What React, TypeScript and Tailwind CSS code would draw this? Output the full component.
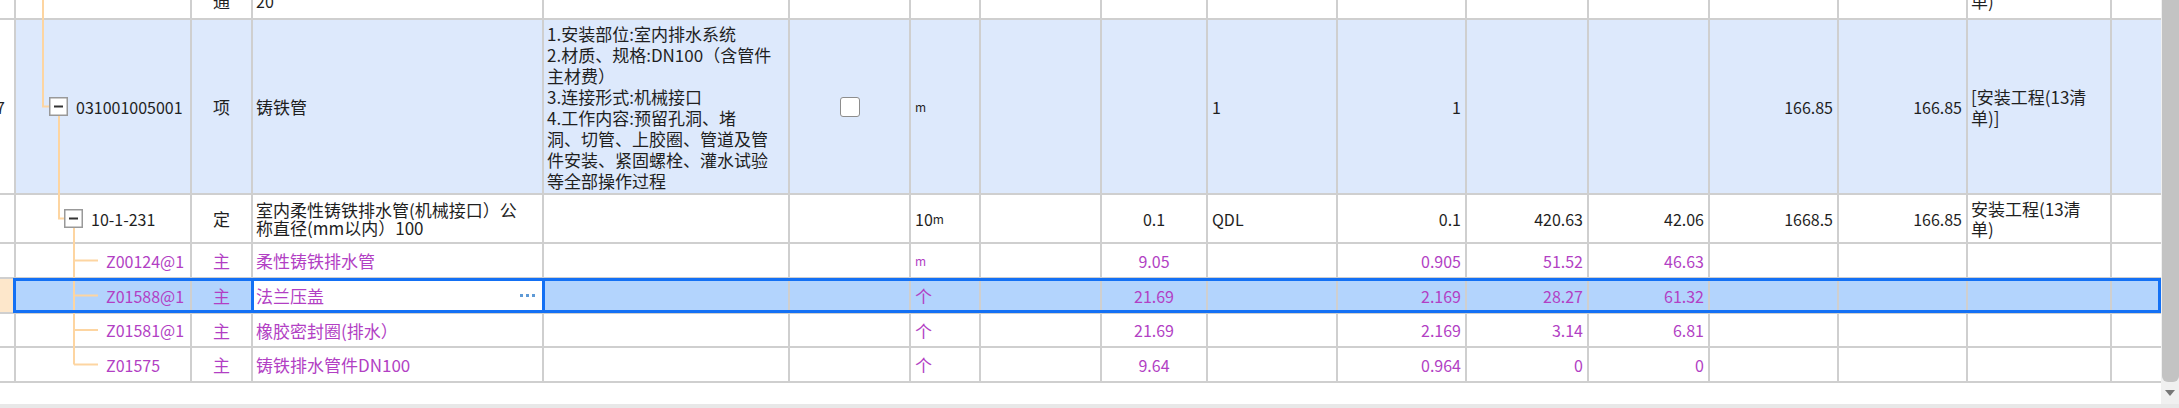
import type { ReactNode } from 'react'

// column widths between the 2px grid lines
const COLS =
  'grid-cols-[14px_174px_59px_289px_244px_119px_68px_119px_104px_128px_127px_120px_119px_127px_127px_142px_49px]'

const ROW_BLUE = 'bg-[#dde9fc]'
const ROW_SEL = 'bg-[#b3d4fd]'
const PURPLE = 'text-[#b23fc4]'

type Align = 'l' | 'c' | 'r' | 'b'

function Cell({
  bg = 'bg-white',
  align = 'l',
  className = '',
  children,
}: {
  bg?: string
  align?: Align
  className?: string
  children?: ReactNode
}) {
  const justify =
    align === 'c'
      ? 'justify-center'
      : align === 'r'
        ? 'justify-end pr-[4px]'
        : align === 'b'
          ? 'justify-between pl-[3px] pr-[7px]'
          : 'justify-start pl-[3px]'
  return (
    <div className={`flex items-center overflow-hidden whitespace-nowrap ${justify} ${bg} ${className}`}>
      {children}
    </div>
  )
}

// cells of the row cut off at the top edge: only the bottom of the text shows
function Cut({ align = 'l', offset, children }: { align?: Align; offset: string; children?: ReactNode }) {
  return (
    <div className={`overflow-hidden bg-white ${align === 'c' ? 'text-center' : 'pl-[3px]'}`}>
      <div className={`leading-[21px] whitespace-nowrap ${offset}`}>{children}</div>
    </div>
  )
}

const Num = ({ children }: { children: ReactNode }) => <span className="text-[16px] leading-none">{children}</span>
const Txt = ({ children }: { children: ReactNode }) => <span className="text-[17px] leading-none">{children}</span>

const materials = [
  { code: 'Z00124@1', name: '柔性铸铁排水管', unit: 'm', content: '9.05', qty: '0.905', price: '51.52', total: '46.63' },
  { code: 'Z01588@1', name: '法兰压盖', unit: '个', content: '21.69', qty: '2.169', price: '28.27', total: '61.32', selected: true },
  { code: 'Z01581@1', name: '橡胶密封圈(排水）', unit: '个', content: '21.69', qty: '2.169', price: '3.14', total: '6.81' },
  { code: 'Z01575', name: '铸铁排水管件DN100', unit: '个', content: '9.64', qty: '0.964', price: '0', total: '0' },
]

const features = [
  '1.安装部位:室内排水系统',
  '2.材质、规格:DN100（含管件',
  '主材费）',
  '3.连接形式:机械接口',
  '4.工作内容:预留孔洞、堵',
  '洞、切管、上胶圈、管道及管',
  '件安装、紧固螺栓、灌水试验',
  '等全部操作过程',
]

function MinusBox({ x, y }: { x: number; y: number }) {
  return (
    <g>
      <rect x={x + 0.75} y={y + 0.75} width={17.5} height={17.5} fill="#ffffff" stroke="#999999" strokeWidth={1.5} />
      <line x1={x + 5} y1={y + 9.5} x2={x + 14} y2={y + 9.5} stroke="#333333" strokeWidth={2} />
    </g>
  )
}

function TreeLines() {
  const childY = [260.5, 295.5, 330, 364.5]
  return (
    <svg className="absolute left-0 top-0 pointer-events-none" width={110} height={383} viewBox="0 0 110 383">
      <g stroke="#fdd5a1" strokeWidth={2} fill="none">
        <path d="M43 0 V106.5 H49" />
        <path d="M59 116 V218.5 H64" />
        <path d="M74 228 V364.5" />
        {childY.map((y) => (
          <path key={y} d={`M74 ${y} H98`} />
        ))}
      </g>
      <MinusBox x={49} y={97} />
      <MinusBox x={64} y={209} />
    </svg>
  )
}

export default function App() {
  return (
    <div className="w-[2179px] h-[408px] flex flex-col overflow-hidden bg-white text-[#1f1f1f] font-['Noto_Sans_CJK_SC',sans-serif]">
      <div className="flex flex-1 min-h-0">
        <div className="w-[2161px] flex flex-col">
          <div
            className={`relative grid ${COLS} grid-rows-[18px_173px_47px_33px_33px_32px_33px] gap-[2px] pb-[2px] bg-[#cfcfcf]`}
          >
            {/* row cut off at the top */}
            <div className="bg-white" />
            <div className="bg-white" />
            <Cut align="c" offset="-mt-[10px] text-[17px]">通</Cut>
            <Cut offset="-mt-[9px] text-[16px]">20</Cut>
            {Array.from({ length: 11 }).map((_, i) => (
              <div key={i} className="bg-white" />
            ))}
            <Cut offset="-mt-[10px] text-[17px]">单)</Cut>
            <div className="bg-white" />

            {/* 清单项 */}
            <Cell>
              <span className="text-[16px] leading-none -ml-[7px]">7</span>
            </Cell>
            <Cell bg={ROW_BLUE} className="pl-[60px]">
              <Num>031001005001</Num>
            </Cell>
            <Cell bg={ROW_BLUE} align="c">
              <Txt>项</Txt>
            </Cell>
            <Cell bg={ROW_BLUE}>
              <Txt>铸铁管</Txt>
            </Cell>
            <Cell bg={ROW_BLUE}>
              <div className="text-[17px] leading-[21px]">
                {features.map((l) => (
                  <div key={l}>{l}</div>
                ))}
              </div>
            </Cell>
            <Cell bg={ROW_BLUE} align="c">
              <div className="w-[20px] h-[20px] rounded-[3px] border border-[#8d8d8d] bg-white" />
            </Cell>
            <Cell bg={ROW_BLUE} className="pl-[4px]">
              <span className="text-[12px] leading-none">m</span>
            </Cell>
            <Cell bg={ROW_BLUE} />
            <Cell bg={ROW_BLUE} />
            <Cell bg={ROW_BLUE} className="pl-[4px]">
              <Num>1</Num>
            </Cell>
            <Cell bg={ROW_BLUE} align="r">
              <Num>1</Num>
            </Cell>
            <Cell bg={ROW_BLUE} />
            <Cell bg={ROW_BLUE} />
            <Cell bg={ROW_BLUE} align="r">
              <Num>166.85</Num>
            </Cell>
            <Cell bg={ROW_BLUE} align="r">
              <Num>166.85</Num>
            </Cell>
            <Cell bg={ROW_BLUE}>
              <div className="text-[17px] leading-[21px]">
                <div>[安装工程(13清</div>
                <div>单)]</div>
              </div>
            </Cell>
            <Cell bg={ROW_BLUE} />

            {/* 定额 */}
            <Cell />
            <Cell className="pl-[75px]">
              <Num>10-1-231</Num>
            </Cell>
            <Cell align="c">
              <Txt>定</Txt>
            </Cell>
            <Cell>
              <div className="text-[17px] leading-[18px]">
                <div>室内柔性铸铁排水管(机械接口）公</div>
                <div>称直径(mm以内）100</div>
              </div>
            </Cell>
            <Cell />
            <Cell />
            <Cell className="pl-[4px]">
              <Num>10</Num>
              <span className="text-[12px] leading-none">m</span>
            </Cell>
            <Cell />
            <Cell align="c">
              <Num>0.1</Num>
            </Cell>
            <Cell className="pl-[4px]">
              <Num>QDL</Num>
            </Cell>
            <Cell align="r">
              <Num>0.1</Num>
            </Cell>
            <Cell align="r">
              <Num>420.63</Num>
            </Cell>
            <Cell align="r">
              <Num>42.06</Num>
            </Cell>
            <Cell align="r">
              <Num>1668.5</Num>
            </Cell>
            <Cell align="r">
              <Num>166.85</Num>
            </Cell>
            <Cell>
              <div className="text-[17px] leading-[20px]">
                <div>安装工程(13清</div>
                <div>单)</div>
              </div>
            </Cell>
            <Cell />

            {/* 主材 */}
            {materials.map((m) => {
              const bg = m.selected ? ROW_SEL : 'bg-white'
              return (
                <div key={m.code} className={`contents ${PURPLE}`}>
                  <Cell bg={m.selected ? 'bg-[#fde7cb]' : 'bg-white'} />
                  <Cell bg={bg} className="pl-[90px]">
                    <Num>{m.code}</Num>
                  </Cell>
                  <Cell bg={bg} align="c">
                    <Txt>主</Txt>
                  </Cell>
                  <Cell align="b">
                    <Txt>{m.name}</Txt>
                    {m.selected && (
                      <span className="flex gap-[3px]">
                        <span className="w-[3px] h-[3px] bg-[#5e9ad6]" />
                        <span className="w-[3px] h-[3px] bg-[#5e9ad6]" />
                        <span className="w-[3px] h-[3px] bg-[#5e9ad6]" />
                      </span>
                    )}
                  </Cell>
                  <Cell bg={bg} />
                  <Cell bg={bg} />
                  <Cell bg={bg} className="pl-[4px]">
                    {m.unit === 'm' ? <span className="text-[12px] leading-none">m</span> : <Txt>{m.unit}</Txt>}
                  </Cell>
                  <Cell bg={bg} />
                  <Cell bg={bg} align="c">
                    <Num>{m.content}</Num>
                  </Cell>
                  <Cell bg={bg} />
                  <Cell bg={bg} align="r">
                    <Num>{m.qty}</Num>
                  </Cell>
                  <Cell bg={bg} align="r">
                    <Num>{m.price}</Num>
                  </Cell>
                  <Cell bg={bg} align="r">
                    <Num>{m.total}</Num>
                  </Cell>
                  <Cell bg={bg} />
                  <Cell bg={bg} />
                  <Cell bg={bg} />
                  <Cell bg={bg} />
                </div>
              )
            })}

            <TreeLines />
            {/* selected row and the cell being edited */}
            <div className="absolute left-[13px] top-[278px] w-[2148px] h-[35px] border-[3px] border-[#1370f4] pointer-events-none" />
            <div className="absolute left-[251px] top-[278px] w-[294px] h-[35px] border-[3px] border-[#1370f4] pointer-events-none" />
          </div>
          <div className="flex-1 bg-white" />
        </div>

        {/* vertical scrollbar */}
        <div className="w-[18px] flex flex-col bg-[#f0f0f0]">
          <div className="h-[382px] ml-[1px] bg-[#c3c3c3] rounded-b-[6px]" />
          <div className="flex justify-center pt-[8px]">
            <svg width="10" height="6" viewBox="0 0 10 6">
              <polygon points="0,0 10,0 5,6" fill="#777777" />
            </svg>
          </div>
        </div>
      </div>
      <div className="h-[4px] bg-[#e8e8e8]" />
    </div>
  )
}
